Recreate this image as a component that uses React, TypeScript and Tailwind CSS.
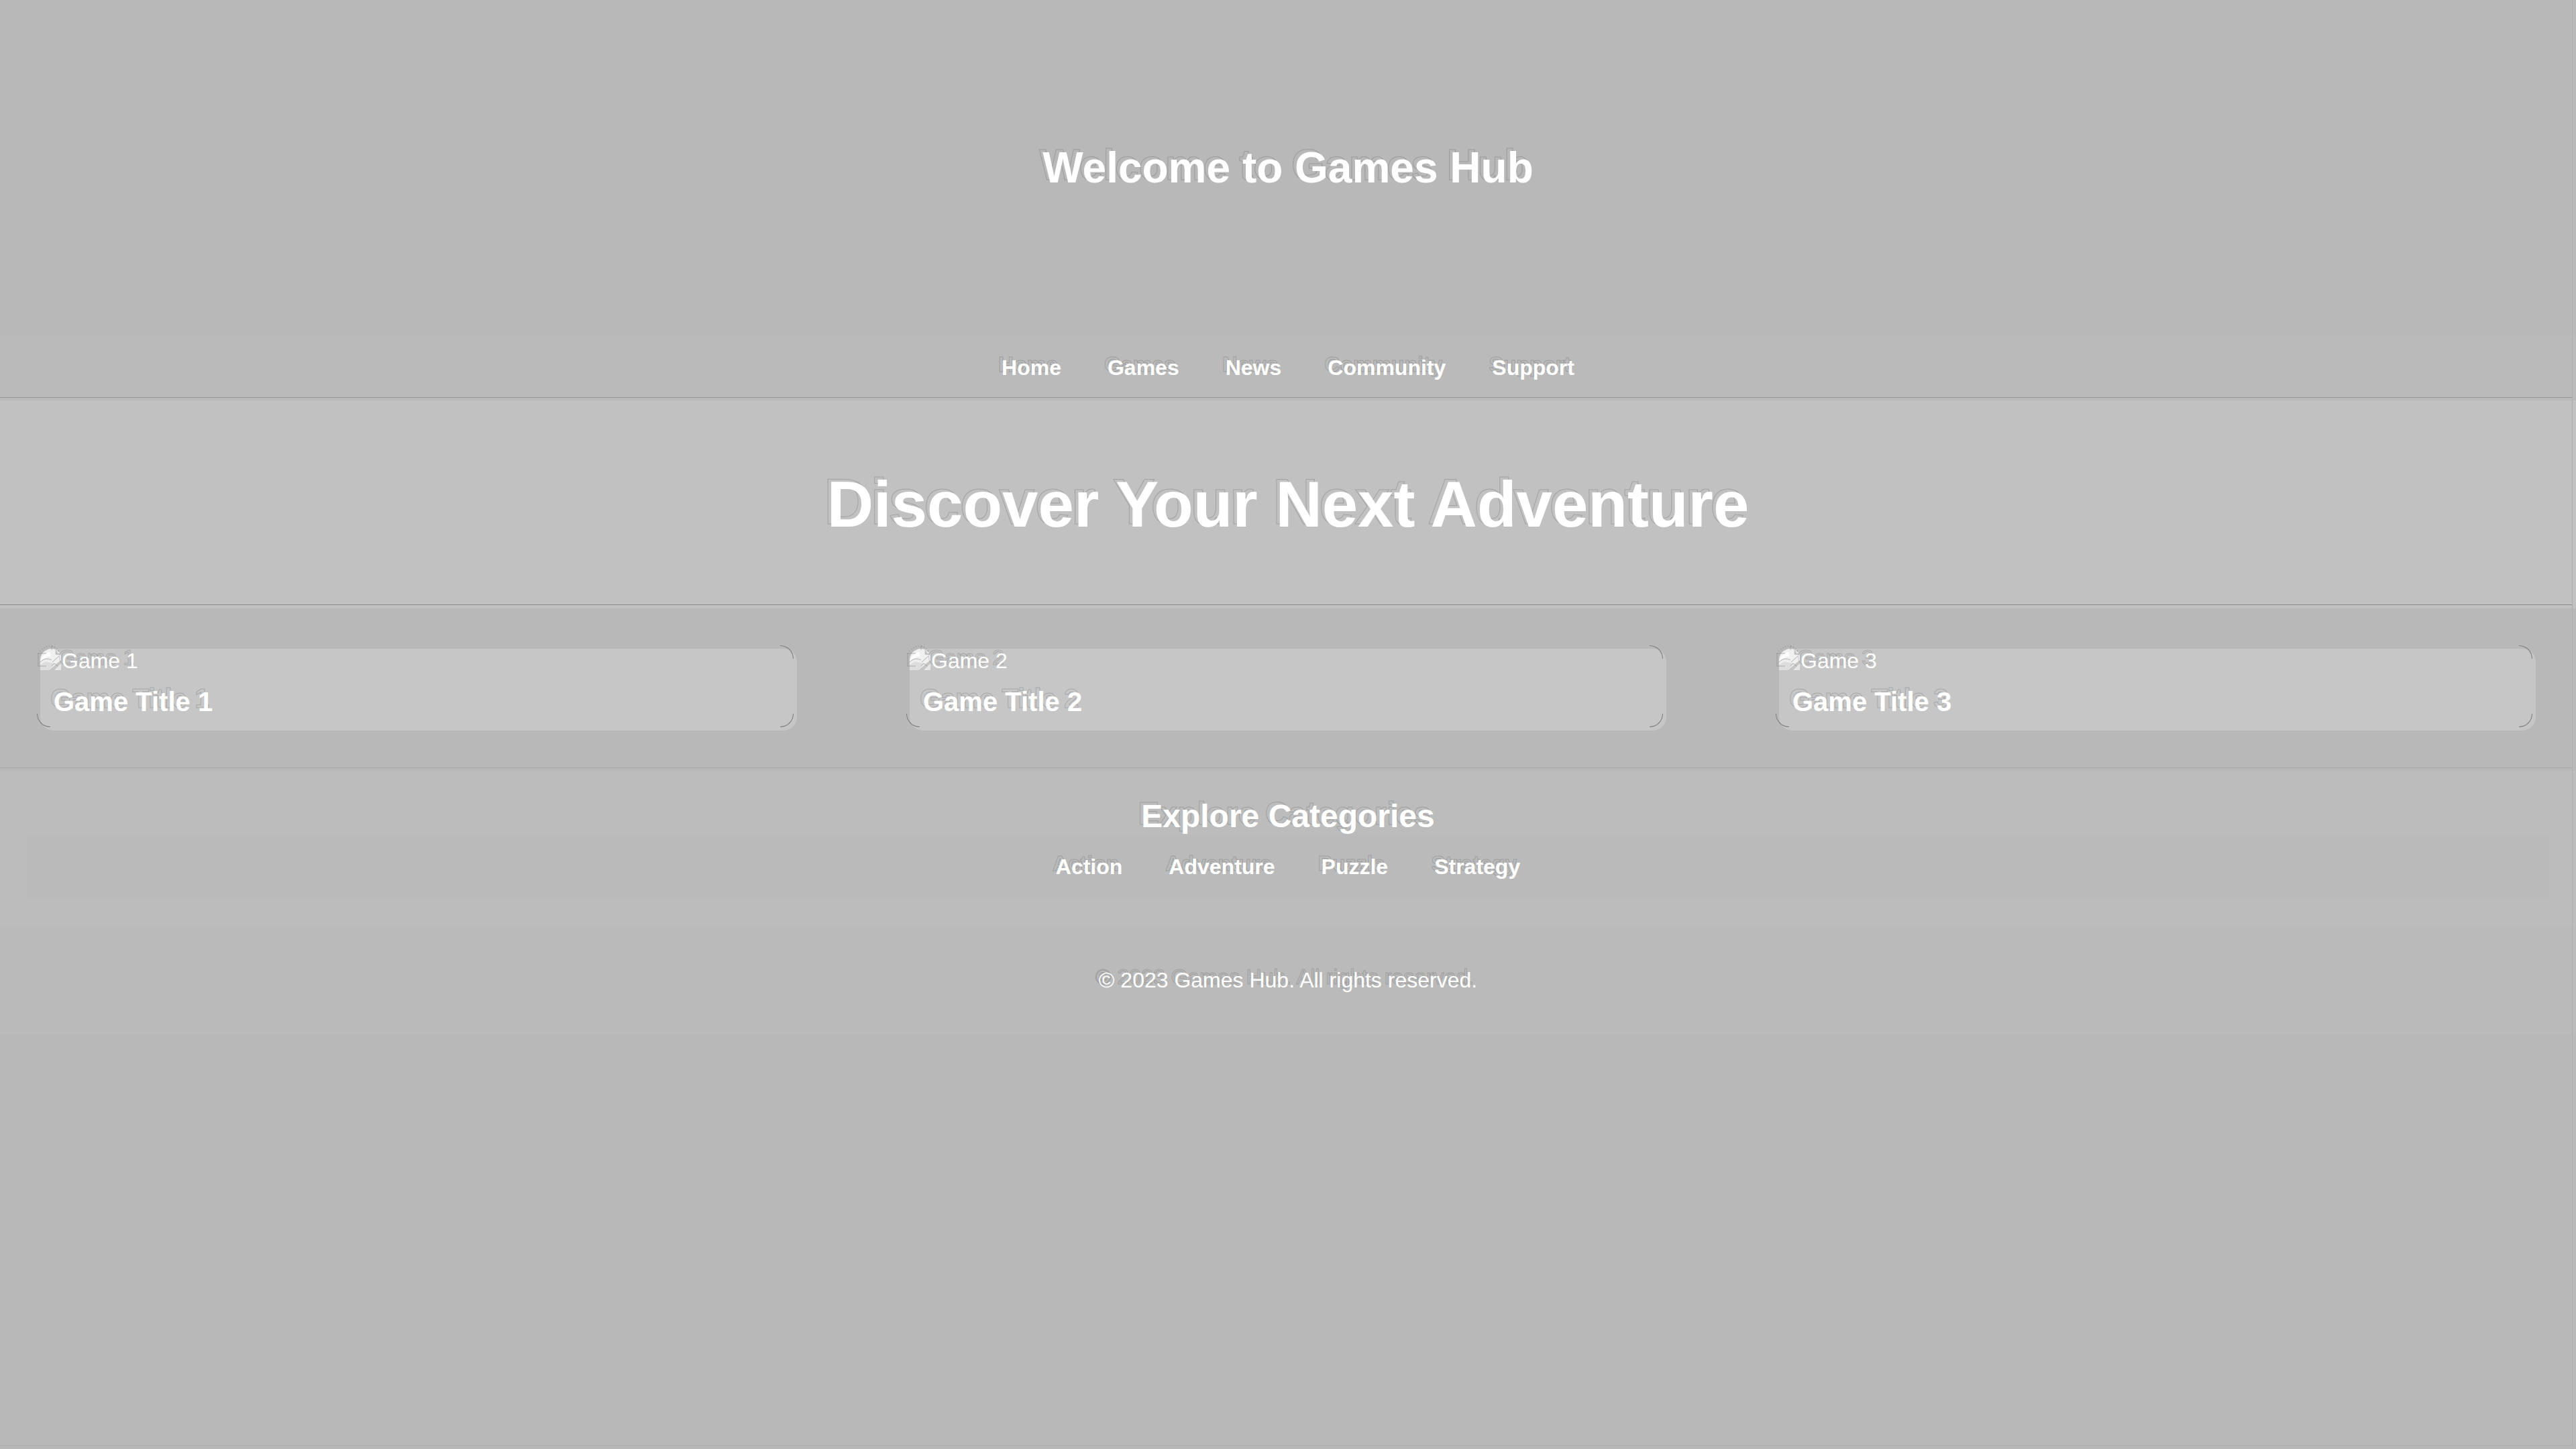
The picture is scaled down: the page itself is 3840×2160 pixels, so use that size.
import React from "react";

const ghost =
  "relative isolate before:pointer-events-none before:absolute before:-left-[5px] before:-top-[5px] before:-z-10 before:whitespace-nowrap before:text-transparent before:content-[attr(data-text)] before:[-webkit-text-stroke:1px_rgba(70,70,70,0.25)]";

function Etched({ text }: { text: string }) {
  return (
    <span className={ghost} data-text={text}>
      {text}
    </span>
  );
}

function NavLinks({ items, label }: { items: string[]; label: string }) {
  return (
    <nav aria-label={label} className="bg-[#bababa] py-[30px]">
      <ul className="flex flex-wrap justify-center gap-x-[69px] leading-[37px]">
        {items.map((item) => (
          <li key={item}>
            <a href="#" className="font-bold">
              <Etched text={item} />
            </a>
          </li>
        ))}
      </ul>
    </nav>
  );
}

function PlaceholderIcon() {
  return (
    <svg viewBox="0 0 32 32" className="size-8 shrink-0 overflow-visible" aria-hidden="true">
      <path d="M0 32V18A17 17 0 0 1 17 0Q27 1 31 10V19L18 32Z" fill="#f0f0f0" />
      <path d="M0 32V24q6-6 12-4l10 2-9 10Z" fill="#dedede" />
      <path d="M1 17Q4 7 14 5l2 6q-8 1-15 6Z" fill="#fdfdfd" />
      <path d="M22 1l9 8h-9Z" fill="#dcdcdc" />
      <path d="M21 32L31 22v10Z" fill="#e6e6e6" />
      <path d="M13 32L31 17v4L20 32Z" fill="#c6c6c6" />
      <path
        d="M-3 26V7h12M-3 26h12M0 20q8-8 17-3M17 26q3-5 6-3l3 3M18 20l10-9M24 3v5h6M17-5v7"
        fill="none"
        stroke="#888"
        strokeOpacity="0.6"
      />
      <path
        d="M-3 7q6-10 18-11q10 1 13 9"
        fill="none"
        stroke="#666"
        strokeDasharray="1 3"
      />
    </svg>
  );
}

function GameCard({ n }: { n: number }) {
  return (
    <article className="relative m-5 w-[30%] rounded-[20px] bg-[#c6c6c6]">
      <div className="flex h-[37px] items-start leading-[37px]">
        <PlaceholderIcon />
        <Etched text={`Game ${n}`} />
      </div>
      <h3 className="p-5 text-[40px] leading-[45px] font-bold">
        <Etched text={`Game Title ${n}`} />
      </h3>
      <span className="absolute -top-[5px] right-[5px] size-5 rounded-tr-[20px] border-t border-r border-[#7c7c7c]" />
      <span className="absolute right-[5px] bottom-[5px] size-5 rounded-br-[20px] border-r border-b border-[#7c7c7c]" />
      <span className="absolute bottom-[5px] -left-[5px] size-5 rounded-bl-[20px] border-b border-l border-[#7c7c7c]" />
    </article>
  );
}

export default function App() {
  return (
    <div className="relative min-h-screen bg-[#b8b8b8] font-['Liberation_Sans',Arial,sans-serif] text-[32px] leading-[37px] text-white">
      <header className="flex h-[500px] items-center justify-center">
        <h1 className="text-[64px] leading-[74px] font-bold">
          <Etched text="Welcome to Games Hub" />
        </h1>
      </header>
      <div className="relative">
        <NavLinks label="Main" items={["Home", "Games", "News", "Community", "Support"]} />
        <span className="absolute right-[5px] bottom-1 left-0 h-px bg-[#969696]" />
      </div>
      <section className="relative bg-[#c1c1c1] py-[100px] text-center">
        <h2 className="text-[96px] leading-[110px] font-bold">
          <Etched text="Discover Your Next Adventure" />
        </h2>
        <span className="absolute -top-[5px] right-[5px] bottom-[5px] left-0 border-r border-b border-r-[#a2a2a2] border-b-[#8a8a8a]" />
      </section>
      <section className="relative flex justify-between p-10">
        <GameCard n={1} />
        <GameCard n={2} />
        <GameCard n={3} />
        <span className="absolute right-[5px] bottom-1 left-0 h-px bg-[#a6a6a6]" />
      </section>
      <section className="bg-[#bcbcbc] p-10">
        <h2 className="text-center text-[48px] leading-[55px] font-bold">
          <Etched text="Explore Categories" />
        </h2>
        <NavLinks label="Categories" items={["Action", "Adventure", "Puzzle", "Strategy"]} />
      </section>
      <footer className="bg-[#bababa] py-[62px] text-center">
        <p>
          <Etched text="© 2023 Games Hub. All rights reserved." />
        </p>
      </footer>
      <span className="pointer-events-none absolute top-0 right-[5px] bottom-[5px] left-0 border-r border-b border-[#aeaeae]" />
    </div>
  );
}
